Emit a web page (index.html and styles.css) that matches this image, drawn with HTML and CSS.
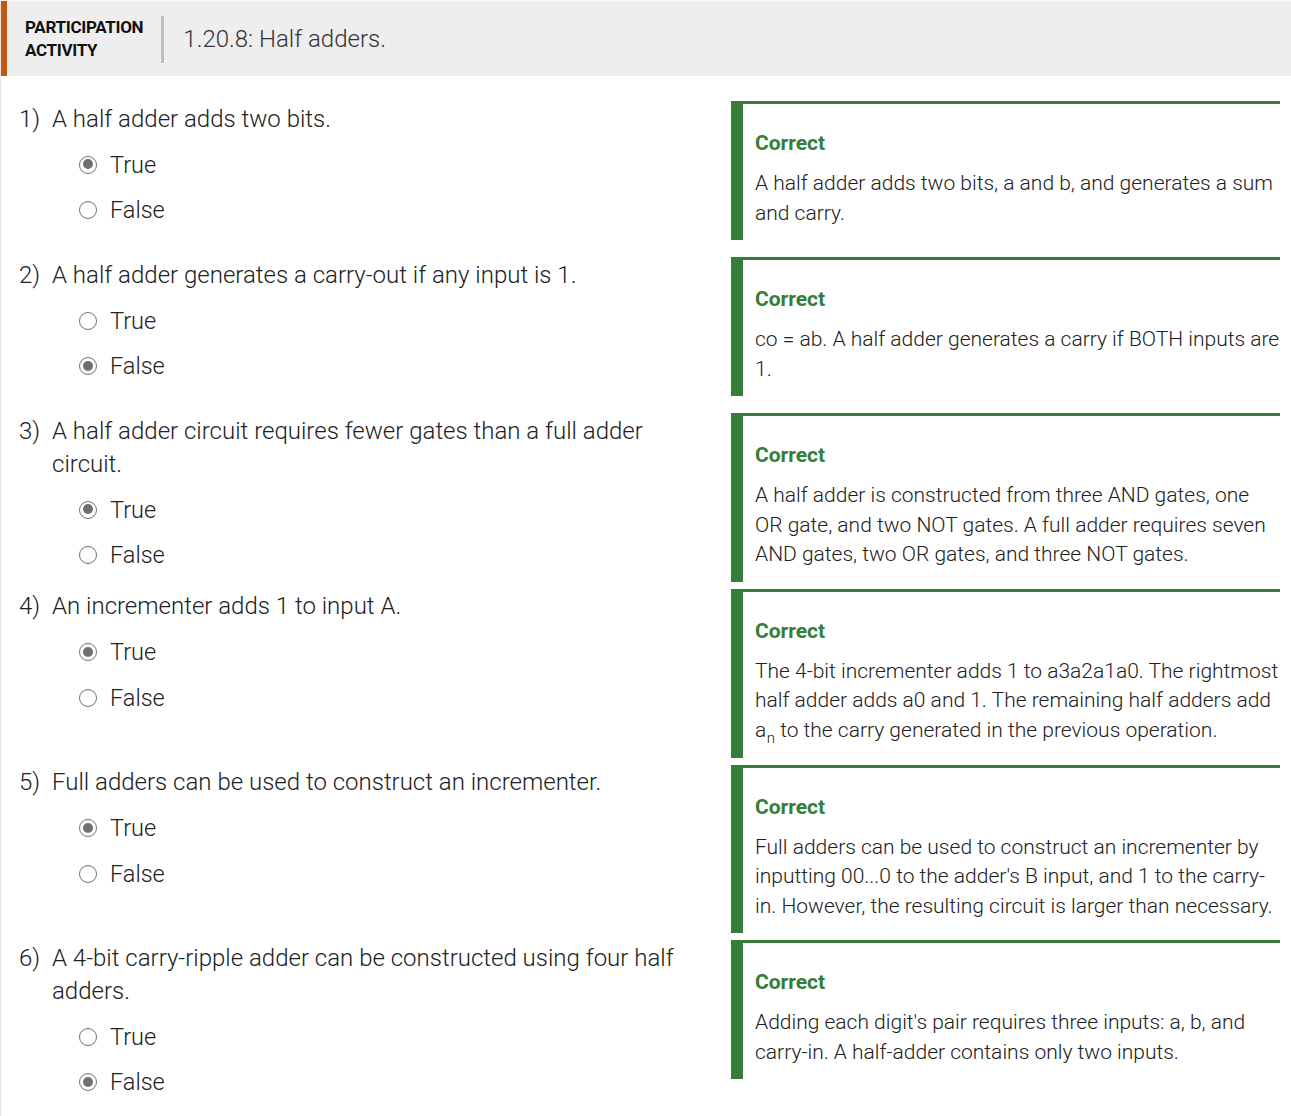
FILE: index.html
```html
<!DOCTYPE html>
<html lang="en">
<head>
<meta charset="utf-8">
<title>1.20.8: Half adders.</title>
<link rel="stylesheet" href="styles.css">
</head>
<body>
<div class="activity">
  <header class="act-header">
    <div class="act-label">PARTICIPATION<br>ACTIVITY</div>
    <div class="act-sep"></div>
    <h1 class="act-title">1.20.8: Half adders.</h1>
  </header>

  <div class="questions">
    <div class="qrow">
      <div class="qleft">
        <div class="qtext"><span class="qnum">1)</span><span class="qbody">A half adder adds two bits.</span></div>
        <ul class="opts">
          <li class="opt"><span class="radio checked"></span>True</li>
          <li class="opt"><span class="radio"></span>False</li>
        </ul>
      </div>
      <div class="fb">
        <div class="fb-title">Correct</div>
        <p class="fb-text">A half adder adds two bits, a and b, and generates a sum and carry.</p>
      </div>
    </div>

    <div class="qrow">
      <div class="qleft">
        <div class="qtext"><span class="qnum">2)</span><span class="qbody">A half adder generates a carry-out if any input is 1.</span></div>
        <ul class="opts">
          <li class="opt"><span class="radio"></span>True</li>
          <li class="opt"><span class="radio checked"></span>False</li>
        </ul>
      </div>
      <div class="fb">
        <div class="fb-title">Correct</div>
        <p class="fb-text">co = ab. A half adder generates a carry if BOTH inputs are 1.</p>
      </div>
    </div>

    <div class="qrow">
      <div class="qleft">
        <div class="qtext"><span class="qnum">3)</span><span class="qbody">A half adder circuit requires fewer gates than a full adder circuit.</span></div>
        <ul class="opts">
          <li class="opt"><span class="radio checked"></span>True</li>
          <li class="opt"><span class="radio"></span>False</li>
        </ul>
      </div>
      <div class="fb">
        <div class="fb-title">Correct</div>
        <p class="fb-text">A half adder is constructed from three AND gates, one OR gate, and two NOT gates. A full adder requires seven AND gates, two OR gates, and three NOT gates.</p>
      </div>
    </div>

    <div class="qrow">
      <div class="qleft">
        <div class="qtext"><span class="qnum">4)</span><span class="qbody">An incrementer adds 1 to input A.</span></div>
        <ul class="opts">
          <li class="opt"><span class="radio checked"></span>True</li>
          <li class="opt"><span class="radio"></span>False</li>
        </ul>
      </div>
      <div class="fb">
        <div class="fb-title">Correct</div>
        <p class="fb-text">The 4-bit incrementer adds 1 to a3a2a1a0. The rightmost half adder adds a0 and 1. The remaining half adders add a<sub>n</sub> to the carry generated in the previous operation.</p>
      </div>
    </div>

    <div class="qrow">
      <div class="qleft">
        <div class="qtext"><span class="qnum">5)</span><span class="qbody">Full adders can be used to construct an incrementer.</span></div>
        <ul class="opts">
          <li class="opt"><span class="radio checked"></span>True</li>
          <li class="opt"><span class="radio"></span>False</li>
        </ul>
      </div>
      <div class="fb">
        <div class="fb-title">Correct</div>
        <p class="fb-text">Full adders can be used to construct an incrementer by inputting 00...0 to the adder's B input, and 1 to the carry-in. However, the resulting circuit is larger than necessary.</p>
      </div>
    </div>

    <div class="qrow">
      <div class="qleft">
        <div class="qtext"><span class="qnum">6)</span><span class="qbody">A 4-bit carry-ripple adder can be constructed using four half adders.</span></div>
        <ul class="opts">
          <li class="opt"><span class="radio"></span>True</li>
          <li class="opt"><span class="radio checked"></span>False</li>
        </ul>
      </div>
      <div class="fb">
        <div class="fb-title">Correct</div>
        <p class="fb-text">Adding each digit's pair requires three inputs: a, b, and carry-in. A half-adder contains only two inputs.</p>
      </div>
    </div>
  </div>
</div>
</body>
</html>
```

FILE: styles.css
```css
html, body {
  margin: 0;
  padding: 0;
  background: #ffffff;
}

body {
  font-family: Roboto, "Liberation Sans", Arial, sans-serif;
  color: #212121;
}

.activity {
  border-left: 1px solid #e6e6e6;
  border-top: 1px solid #f7f7f7;
  min-height: 1115px;
}

.act-header {
  display: flex;
  align-items: center;
  height: 75px;
  background: #eeeeee;
  border-left: 6px solid #c4570f;
  padding-left: 18px;
  box-sizing: border-box;
}

.act-label {
  font-weight: 700;
  font-size: 17px;
  line-height: 23px;
  color: #111;
  letter-spacing: -0.3px;
}

.act-sep {
  width: 3px;
  height: 47px;
  background: #bdbdbd;
  margin: 2px 19px 0 18px;
}

.act-title {
  margin: 0;
  font-weight: 300;
  font-size: 24px;
  line-height: 30px;
  color: #333;
}

.questions {
  padding-top: 25px;
}

.qrow {
  display: flex;
  align-items: flex-start;
  justify-content: space-between;
  min-height: 149px;
  margin-bottom: 7px;
  padding-left: 18px;
}

.qleft {
  flex: 1;
  margin-right: 20px;
  padding-top: 1.5px;
}

.qtext {
  display: flex;
  font-weight: 300;
  font-size: 24px;
  line-height: 33px;
  color: #212121;
}

.qnum {
  flex: 0 0 33px;
}

.qbody {
  flex: 1;
}

.opts {
  list-style: none;
  margin: 0;
  padding: 0 0 0 60px;
}

.opt {
  display: flex;
  align-items: center;
  margin-top: 12.5px;
  height: 33px;
  font-weight: 300;
  font-size: 23.5px;
  color: #212121;
}

.radio {
  position: relative;
  width: 18px;
  height: 18px;
  box-sizing: border-box;
  border: 1.5px solid #707070;
  border-radius: 50%;
  margin-right: 13px;
  flex: 0 0 18px;
}

.radio.checked::after {
  content: "";
  position: absolute;
  left: 2.5px;
  top: 2.5px;
  width: 10px;
  height: 10px;
  border-radius: 50%;
  background: #707070;
}

.fb {
  flex: 0 0 549px;
  box-sizing: border-box;
  margin-right: 11px;
  border-left: 12px solid #367d3a;
  border-top: 3px solid #367d3a;
  padding: 24px 0 12px 12px;
}

.fb-title {
  font-weight: 700;
  font-size: 21px;
  line-height: 30px;
  color: #367d3a;
  margin-bottom: 11px;
}

.fb-text {
  margin: 0;
  font-weight: 300;
  font-size: 21px;
  line-height: 29.5px;
  color: #212121;
}

.fb-text sub {
  display: inline-block;
  font-size: 15px;
  line-height: 1;
  vertical-align: -6px;
  margin-left: 0.5px;
}
```
